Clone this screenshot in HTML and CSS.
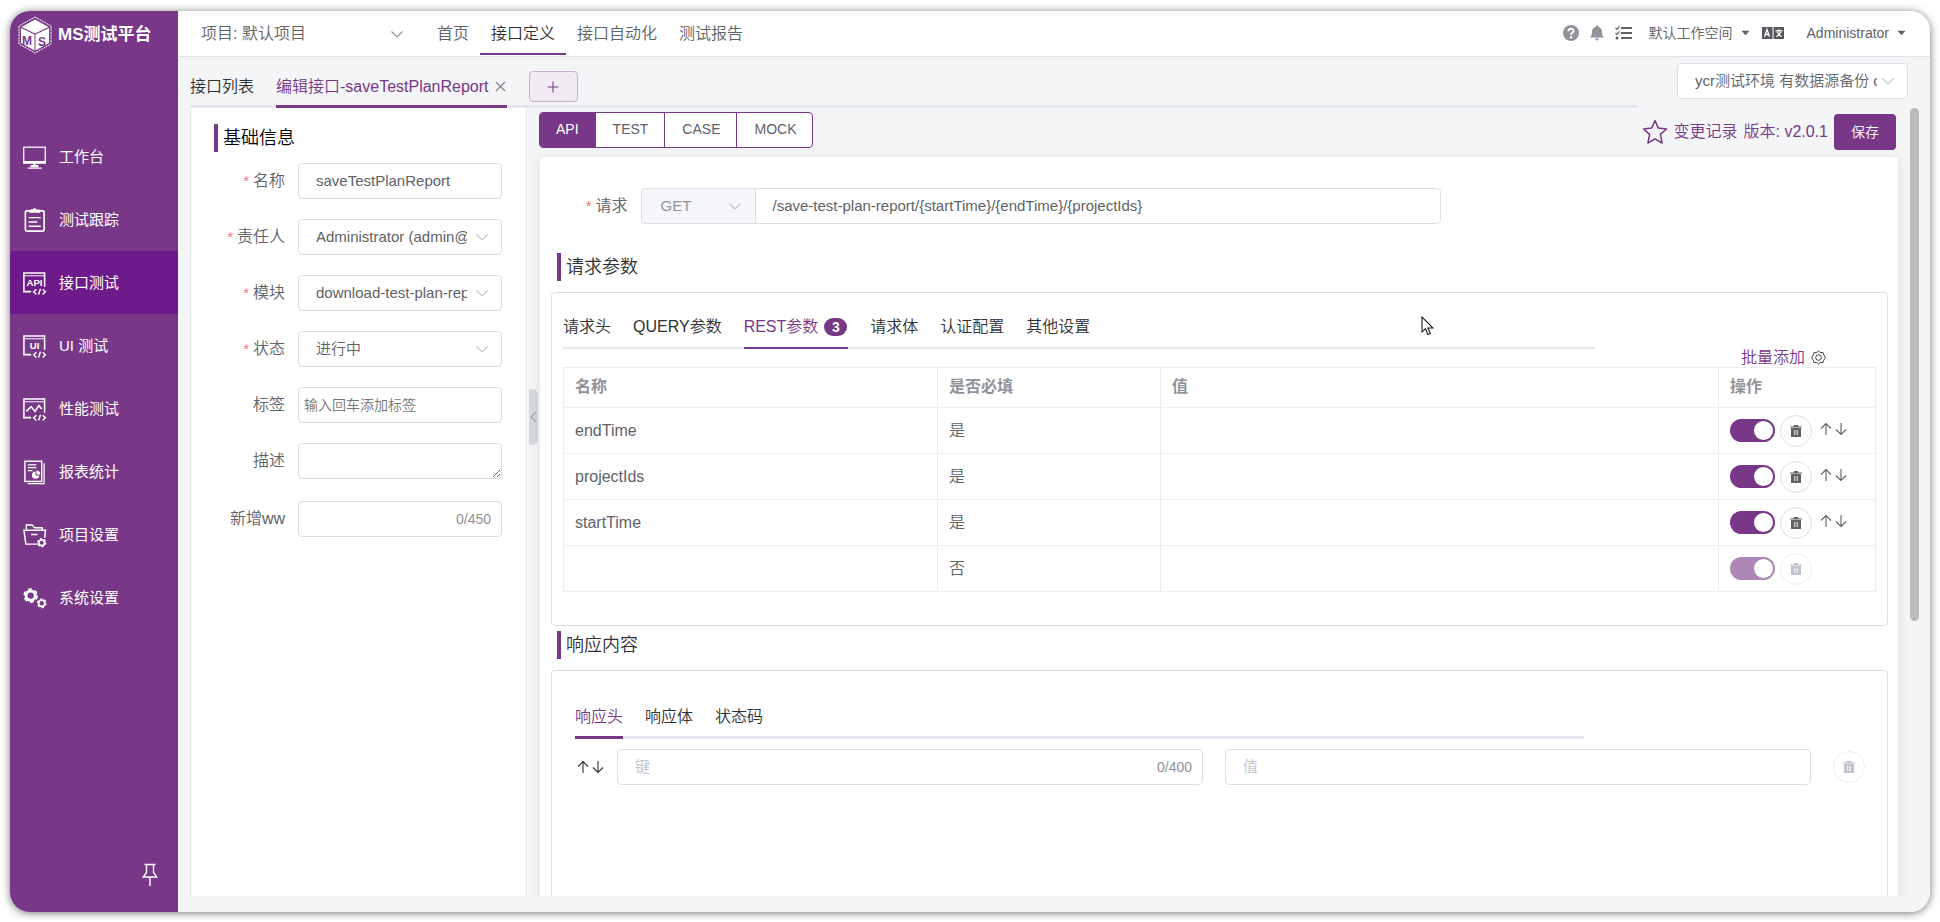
FILE: index.html
```html
<!DOCTYPE html>
<html lang="zh-CN">
<head>
<meta charset="utf-8">
<title>MS测试平台</title>
<link rel="stylesheet" href="styles.css">
</head>
<body>
<svg class="sprite" aria-hidden="true">
  <symbol id="chevron" viewBox="0 0 14 14"><path d="M1.500 4.500l5.500 5.500 5.500-5.500" fill="none" stroke="currentColor" stroke-width="1.200"/></symbol>
  <symbol id="caret" viewBox="0 0 10 6"><path d="M0.500 0.500h9L5 5.500z" fill="currentColor"/></symbol>
  <symbol id="trash" viewBox="0 0 14 14"><path d="M1 2.500h3.500L5 1h4l0.500 1.500H13v1H1zM2 4h10v9H2z" fill="currentColor"/><path d="M5.800 6v5M8.200 6v5" stroke="#fff" stroke-width="0.900"/></symbol>
  <symbol id="up" viewBox="0 0 12 14"><path d="M6 13V1.500M1 6.500l5-5 5 5" fill="none" stroke="currentColor" stroke-width="1.100"/></symbol>
  <symbol id="down" viewBox="0 0 12 14"><path d="M6 1v11.500M1 7.500l5 5 5-5" fill="none" stroke="currentColor" stroke-width="1.100"/></symbol>
  <symbol id="window" viewBox="0 0 26 26"><g fill="none" stroke="#fff"><path d="M2 22V2.500h21.500V17" stroke-width="1.600"/><path d="M2 5.500h21.500" stroke-width="1"/><path d="M1.200 22h8.300" stroke-width="2"/><path d="M15 19.500l-2.800 2.700L15 25M21.500 19.500l2.800 2.700-2.800 2.800M19.200 19l-2 6" stroke-width="1.500"/></g></symbol>
</svg>
<div class="window">
  <aside class="sidebar">
    <a class="brand" href="#">
      <svg width="36" height="38" viewBox="0 0 36 38"><path d="M18 1l16 9v18l-16 9-16-9V10z" fill="none" stroke="#fff" stroke-width="1" stroke-dasharray="2 0.700"/><path d="M18 3.500L31.500 11 18 17.500 4.500 11z" fill="#fff"/><path d="M4 12l13.500 6.500v16L4 27zM32 12l-13.500 6.500v16L32 27z" fill="#fff"/><text x="5" y="29" class="mark">M</text><text x="21" y="30" class="mark">S</text></svg>
      <span>MS测试平台</span>
    </a>
    <nav class="menu">
      <a href="#"><svg viewBox="0 0 26 26"><rect x="1.800" y="2.800" width="22.400" height="16.500" fill="none" stroke="#fff" stroke-width="1.300"/><path d="M1.200 18.300h23.600M13 19v3.500M9 22.500h8" stroke="#fff" stroke-width="2.200"/><path d="M6 24.500h14.500" stroke="#fff" stroke-width="1.400"/></svg>工作台</a>
      <a href="#"><svg viewBox="0 0 26 26"><rect x="3.500" y="3.500" width="19.500" height="21" rx="1.500" fill="none" stroke="#fff" stroke-width="1.700"/><path d="M7.500 5.500h11.500L18 2h-2.500L13 0.500 10.500 2H8.500z" fill="#fff"/><path d="M7 10.500h12.500M7 15h9M7 19.500h12.500" stroke="#fff" stroke-width="1.500"/></svg>测试跟踪</a>
      <a class="active" href="#"><svg viewBox="0 0 26 26"><use href="#window"/><text x="13" y="16.500" text-anchor="middle" class="glyph">API</text></svg>接口测试</a>
      <a href="#"><svg viewBox="0 0 26 26"><use href="#window"/><text x="13" y="16.500" text-anchor="middle" class="glyph">UI</text></svg>UI 测试</a>
      <a href="#"><svg viewBox="0 0 26 26"><use href="#window"/><path d="M4.500 15.500l5-5 4 5 4-6 3 3.500" fill="none" stroke="#fff" stroke-width="1.600"/></svg>性能测试</a>
      <a href="#"><svg viewBox="0 0 26 26"><rect x="3" y="1.800" width="17.500" height="21" fill="none" stroke="#fff" stroke-width="1.500"/><path d="M23 4v21H6" fill="none" stroke="#fff" stroke-width="1.300"/><path d="M6 5.500h9M6 8.500h9M6 11.500h5" stroke="#fff" stroke-width="1.300"/><path d="M14 12.500a3.800 3.800 0 1 0 4 4.200h-4z" fill="#fff"/><path d="M15 11.500a4 4 0 0 1 4 4h-4z" fill="#fff"/></svg>报表统计</a>
      <a href="#"><svg viewBox="0 0 26 26"><path d="M4.500 7V2.500h6l2.500 3h8V8M16.500 22.500H4L2 8h22.500l-1 8M9.500 12.500h6.500" fill="none" stroke="#fff" stroke-width="1.500"/><circle cx="20.500" cy="21" r="3" fill="none" stroke="#fff" stroke-width="1.800"/><circle cx="20.500" cy="21" r="4.300" fill="none" stroke="#fff" stroke-width="1.200" stroke-dasharray="2 2.500"/></svg>项目设置</a>
      <a href="#"><svg viewBox="0 0 26 26"><circle cx="9" cy="10.500" r="4.800" fill="none" stroke="#fff" stroke-width="3"/><circle cx="9" cy="10.500" r="6.800" fill="none" stroke="#fff" stroke-width="1.600" stroke-dasharray="4 3.120"/><circle cx="20.500" cy="18.500" r="3.200" fill="none" stroke="#fff" stroke-width="1.800"/><circle cx="20.500" cy="18.500" r="4.500" fill="none" stroke="#fff" stroke-width="1.200" stroke-dasharray="2.500 2.200"/></svg>系统设置</a>
    </nav>
    <button class="pin" aria-label="固定"><svg width="16" height="24" viewBox="0 0 16 24"><path d="M2.500 1.500h11M4.500 2v7.500L1.200 14h13.600l-3.300-4.500V2M8 14v9" fill="none" stroke="#fff" stroke-width="1.400"/></svg></button>
  </aside>

  <div class="main">
    <header class="topbar">
      <button class="project"><span>项目: 默认项目</span><svg width="14" height="14"><use href="#chevron"/></svg></button>
      <nav class="topnav"><a href="#">首页</a><a class="active" href="#">接口定义</a><a href="#">接口自动化</a><a href="#">测试报告</a></nav>
      <div class="tools">
        <button aria-label="帮助"><svg width="16" height="16" viewBox="0 0 16 16"><circle cx="8" cy="8" r="8" fill="#909399"/><path d="M5.500 6.300c0-3.300 5-3.300 5-0.300 0 1.800-2.400 1.700-2.400 3.700" fill="none" stroke="#fff" stroke-width="2"/><circle cx="8" cy="12.200" r="1.200" fill="#fff"/></svg></button>
        <button aria-label="通知"><svg width="14" height="16" viewBox="0 0 14 16"><path d="M6 0.500h2v1.200c3 .5 4 2.800 4 5.300 0 2.500.5 4 2 5.500H0c1.500-1.500 2-3 2-5.500 0-2.500 1-4.800 4-5.300zM5 13.500h4a2 2 0 0 1-4 0z" fill="#909399"/></svg></button>
        <button aria-label="任务"><svg width="17" height="14" viewBox="0 0 17 14"><path d="M6 2h11M6 7h11M6 12h11" stroke="#606266" stroke-width="1.800"/><path d="M0.500 2l1.300 1.300L4.500 0.500M0.500 7l1.300 1.300L4.500 5.500" fill="none" stroke="#606266" stroke-width="1.200"/><circle cx="2" cy="12" r="1.500" fill="#606266"/></svg></button>
        <button class="drop space">默认工作空间<svg width="9" height="6"><use href="#caret"/></svg></button>
        <button aria-label="语言"><svg width="22" height="12" viewBox="0 0 22 12"><path d="M0 0h10.500v12H0zM11.500 0H22v12H11.500z" fill="#55585e"/><path d="M2.500 9.800L5 2.500l2.500 7.300M3.500 7.500h3" fill="none" stroke="#fff" stroke-width="1.300"/><path d="M13.500 3.800h7M17 2v1.500M15 5l4.500 4.800M19 5l-4.500 4.800" fill="none" stroke="#fff" stroke-width="1.200"/></svg></button>
        <button class="drop user">Administrator<svg width="9" height="6"><use href="#caret"/></svg></button>
      </div>
    </header>

    <div class="tabrow">
      <div class="doctabs">
        <button class="doctab">接口列表</button>
        <button class="doctab active">编辑接口-saveTestPlanReport<svg width="11" height="11" viewBox="0 0 11 11"><path d="M1 1l9 9M10 1l-9 9" stroke="#808287" stroke-width="1.100"/></svg></button>
        <button class="add" aria-label="新增"><svg width="12" height="12" viewBox="0 0 12 12"><path d="M6 0.500v11M0.500 6h11" stroke="#783887" stroke-width="1.100"/></svg></button>
      </div>
      <button class="field env" aria-label="环境"><span>ycr测试环境 有数据源备份 c</span><svg width="14" height="14"><use href="#chevron"/></svg></button>
    </div>

    <div class="body">
      <section class="info">
        <h2 class="title">基础信息</h2>
        <form class="form">
          <label class="req" for="f1">名称</label><input id="f1" class="field" value="saveTestPlanReport">
          <label class="req" for="f2">责任人</label><button type="button" id="f2" class="field"><span>Administrator (admin@metersphere.io)</span><svg width="14" height="14"><use href="#chevron"/></svg></button>
          <label class="req" for="f3">模块</label><button type="button" id="f3" class="field"><span>download-test-plan-report</span><svg width="14" height="14"><use href="#chevron"/></svg></button>
          <label class="req" for="f4">状态</label><button type="button" id="f4" class="field"><span>进行中</span><svg width="14" height="14"><use href="#chevron"/></svg></button>
          <label for="f5">标签</label><input id="f5" class="field tag" placeholder="输入回车添加标签">
          <label for="f6">描述</label><textarea id="f6" class="field" rows="1"></textarea>
          <label for="f7">新增ww</label><div class="field counted"><input id="f7"><span>0/450</span></div>
        </form>
      </section>
      <div class="splitter"><button class="grip" aria-label="收起"><svg width="7" height="12" viewBox="0 0 7 12"><path d="M6 1L1 6l5 5" fill="none" stroke="#a0a3a9" stroke-width="1.100"/></svg></button></div>

      <section class="work">
        <div class="actions">
          <div class="modes"><button class="active">API</button><button>TEST</button><button>CASE</button><button>MOCK</button></div>
          <div class="history">
            <svg width="26" height="26" viewBox="0 0 26 26"><path d="M13 1.500l3.300 7.600 8.200 0.900-6.100 5.400 1.700 8.600L13 19.800 5.900 24l1.700-8.600L1.500 10l8.200-0.900z" fill="none" stroke="#783887" stroke-width="1.500" stroke-linejoin="round"/></svg>
            <a href="#">变更记录</a><a href="#">版本: v2.0.1</a><button class="save">保存</button>
          </div>
        </div>

        <div class="card">
          <div class="request">
            <label class="req" for="url">请求</label>
            <select class="method" aria-label="方法" disabled><option>GET</option></select><svg class="method-arrow" width="14" height="14"><use href="#chevron"/></svg>
            <input id="url" class="field url" value="/save-test-plan-report/{startTime}/{endTime}/{projectIds}">
          </div>
          <h2 class="title">请求参数</h2>
          <div class="box params">
            <div class="subtabs"><button>请求头</button><button>QUERY参数</button><button class="active">REST参数<b>3</b></button><button>请求体</button><button>认证配置</button><button>其他设置</button></div>
            <div class="batch"><a href="#">批量添加</a><svg width="15" height="15" viewBox="0 0 16 16"><path d="M8 1l2 1.800 2.700-.3.900 2.600L15.300 8l-1.700 2.900-.9 2.600-2.700-.3L8 15l-2-1.800-2.700.3-.9-2.600L.7 8l1.700-2.900.9-2.600 2.700.3z" fill="none" stroke="#303133"/><circle cx="8" cy="8" r="3" fill="none" stroke="#303133"/></svg></div>
            <table>
              <colgroup><col class="c1"><col class="c2"><col><col class="c4"></colgroup>
              <thead><tr><th>名称</th><th>是否必填</th><th>值</th><th>操作</th></tr></thead>
              <tbody>
                <tr><td>endTime</td><td>是</td><td></td><td><div class="ops"><input type="checkbox" class="switch" checked aria-label="启用 endTime"><button class="round" aria-label="删除"><svg width="14" height="14"><use href="#trash"/></svg></button><span class="order"><svg width="12" height="14"><use href="#up"/></svg><svg width="12" height="14"><use href="#down"/></svg></span></div></td></tr>
                <tr><td>projectIds</td><td>是</td><td></td><td><div class="ops"><input type="checkbox" class="switch" checked aria-label="启用 projectIds"><button class="round" aria-label="删除"><svg width="14" height="14"><use href="#trash"/></svg></button><span class="order"><svg width="12" height="14"><use href="#up"/></svg><svg width="12" height="14"><use href="#down"/></svg></span></div></td></tr>
                <tr><td>startTime</td><td>是</td><td></td><td><div class="ops"><input type="checkbox" class="switch" checked aria-label="启用 startTime"><button class="round" aria-label="删除"><svg width="14" height="14"><use href="#trash"/></svg></button><span class="order"><svg width="12" height="14"><use href="#up"/></svg><svg width="12" height="14"><use href="#down"/></svg></span></div></td></tr>
                <tr><td></td><td>否</td><td></td><td><div class="ops"><input type="checkbox" class="switch" checked disabled aria-label="启用"><button class="round" disabled aria-label="删除"><svg width="14" height="14"><use href="#trash"/></svg></button></div></td></tr>
              </tbody>
            </table>
          </div>
          <h2 class="title second">响应内容</h2>
          <div class="box response">
            <div class="subtabs thick"><button class="active">响应头</button><button>响应体</button><button>状态码</button></div>
            <div class="pair">
              <span class="order"><svg width="12" height="14"><use href="#up"/></svg><svg width="12" height="14"><use href="#down"/></svg></span>
              <div class="field counted"><input placeholder="键" aria-label="键"><span>0/400</span></div>
              <input class="field" placeholder="值" aria-label="值">
              <button class="round" disabled aria-label="删除"><svg width="14" height="14"><use href="#trash"/></svg></button>
            </div>
          </div>
        </div>
      </section>
      <div class="scrollbar"></div>
    </div>
  </div>
</div>
<svg class="cursor" width="13" height="20" viewBox="0 0 13 20"><path d="M1 1v15l3.500-3.300 2.300 5.800 2.500-1-2.400-5.500H12z" fill="#fff" stroke="#1c1c2a" stroke-width="1.100"/></svg>
</body>
</html>
```

FILE: styles.css
```css
* { box-sizing: border-box; }
body {
  margin: 0;
  padding: 11px 10px 10px;
  height: 100vh;
  overflow: hidden;
  background: #fff;
  color: #606266;
  font: 350 16px/24px "Liberation Sans", "Noto Sans CJK SC", sans-serif;
}
button, input, select, textarea { font: inherit; color: inherit; margin: 0; }
button { background: none; border: 0; padding: 0; cursor: pointer; white-space: nowrap; }
a { color: inherit; text-decoration: none; }
svg { flex: none; display: block; }
.sprite { position: absolute; width: 0; height: 0; }

.window {
  display: flex;
  height: 100%;
  border-radius: 20px;
  overflow: hidden;
  box-shadow: 0 1px 9px rgba(0, 0, 0, .55);
}

.sidebar {
  width: 168px;
  flex: none;
  display: flex;
  flex-direction: column;
  background: #783887;
  color: #fff;
}
.brand { display: flex; align-items: center; gap: 5px; height: 114px; padding: 4px 0 70px 7px; font-size: 17px; font-weight: 700; }
.mark { font: 700 12px "Liberation Sans", sans-serif; fill: #783887; }
.menu a { display: flex; align-items: center; gap: 12px; height: 63px; padding-left: 12px; font-size: 15px; font-weight: 400; }
.menu svg { width: 25px; height: 26px; }
.menu .active { background: #6f1a8b; }
.glyph { font: 700 10px "Liberation Sans", sans-serif; fill: #fff; }
.pin { margin: auto 20px 25px auto; }

.main { flex: 1; min-width: 0; display: flex; flex-direction: column; background: #f4f5f7; }
.topbar { display: flex; align-items: center; height: 46px; flex: none; background: #fff; border-bottom: 1px solid #e2e3e6; }
.project { display: flex; align-items: center; justify-content: space-between; width: 203px; margin-left: 23px; }
.project svg { color: #909399; }
.topnav { display: flex; align-self: flex-start; margin-left: 22px; }
.topnav a { height: 44px; padding: 11px 11px 0; border-bottom: 2px solid transparent; }
.topnav .active { color: #303133; border-color: #783887; }
.tools { display: flex; align-items: center; margin-left: auto; padding: 0 24px 2px 0; gap: 11px; font-size: 14px; }
.drop { display: flex; align-items: center; gap: 8px; }
.tools .space { margin: 0 1px 0 6px; }
.tools .user { margin-left: 12px; }

.tabrow { display: flex; flex: none; height: 51px; padding: 0 22px 0 12px; justify-content: space-between; }
.doctabs { display: flex; width: calc(100% - 270px); border-bottom: 3px solid #e4e7ed; color: #303133; }
.doctab { display: flex; align-items: center; height: 51px; padding-top: 8px; margin-right: 22px; gap: 6px; }
.doctab.active { color: #783887; border-bottom: 3px solid #783887; padding-top: 11px; padding-right: 1px; }
.add { display: flex; align-items: center; justify-content: center; width: 49px; height: 31px; margin-top: 14px; background: #f2ebf3; border: 1px solid #c9afcf; border-radius: 4px; }
.field {
  width: 100%;
  height: 36px;
  min-width: 0;
  padding: 0 17px 1px;
  background: #fff;
  border: 1px solid #dcdfe6;
  border-radius: 4px;
  font-size: 15px;
  outline: 0;
}
button.field { display: flex; align-items: center; gap: 8px; padding-right: 12px; text-align: left; }
.field > span { flex: 1; overflow: hidden; }
.field svg { color: #c0c4cc; }
.field::placeholder, .field input::placeholder { color: #c0c4cc; opacity: 1; }
.env { width: 231px; margin-top: 6px; }
button.env { gap: 4px; }

.body { flex: 1; min-height: 0; display: flex; padding: 0 11px 16px 12px; }
.info { width: 337px; flex: none; background: #fff; border-left: 1px solid #e4e5e8; border-right: 1px solid #e4e7ed; padding: 16px 24px 0 23px; }
.title { margin: 0; padding-left: 5px; border-left: 4px solid #783887; font-size: 18px; line-height: 28px; font-weight: 350; color: #303133; }
.info .title { color: #000; }
.form { display: grid; grid-template-columns: 71px 1fr; column-gap: 13px; row-gap: 20px; margin-top: 11px; }
.form label { text-align: right; line-height: 36px; white-space: nowrap; }
.form label[for="f6"] { height: 38px; }
.req::before { content: "*"; color: #f56c6c; font-size: 14px; margin-right: 4px; }
.form .tag { padding: 0 5px; font-size: 14px; }
.form .tag::placeholder { color: #757575; }
textarea.field { display: block; resize: vertical; height: 36px; }
.counted { display: flex; align-items: center; padding-right: 10px; }
.counted input { flex: 1; min-width: 0; border: 0; padding: 0; outline: 0; background: none; }
.counted > span { flex: none; font-size: 14px; color: #909399; }

.splitter { width: 12px; flex: none; display: flex; align-items: center; padding-bottom: 170px; }
.grip { display: flex; align-items: center; justify-content: center; width: 9px; height: 56px; margin-left: 2px; background: #d5d8de; border-radius: 0 6px 6px 0; }

.work { flex: 1; min-width: 0; overflow: hidden; padding-right: 12px; margin-left: -12px; padding-left: 12px; }
.actions { display: flex; align-items: flex-start; justify-content: space-between; height: 49px; padding-top: 4px; }
.modes { display: flex; border: 1px solid #783887; border-radius: 4px; background: #fff; overflow: hidden; font-size: 14px; }
.modes button { height: 34px; padding: 0 16px 2px 17px; border-left: 1px solid #783887; }
.modes button:first-child { border-left: 0; padding-left: 16px; }
.modes .active { background: #783887; color: #fff; }
.history { display: flex; align-items: center; padding: 2px 2px 0 0; gap: 6px; color: #783887; }
.save { width: 62px; height: 36px; background: #783887; color: #fff; border-radius: 4px; font-size: 14px; }

.card { min-height: 900px; padding: 31px 10px 0 11px; margin-left: 1px; background: #fff; border-radius: 4px; box-shadow: 0 2px 12px rgba(0, 0, 0, .1); }
.request { display: flex; align-items: center; padding-left: 35px; }
.request label { margin-right: 14px; }
.method { appearance: none; width: 115px; height: 36px; margin-right: -1px; padding: 0 18px; border: 1px solid #dcdfe6; border-radius: 4px 0 0 4px; background: #f5f7fa; color: #909399; opacity: 1; font-size: 15px; }
.method-arrow { margin-left: -27px; margin-right: 13px; z-index: 1; color: #c0c4cc; }
.url { width: 686px; border-radius: 0 4px 4px 0; padding-left: 16px; }
.card > .title { margin: 29px 0 11px 6px; }
.card > .second { margin: 5px 0 11px 6px; }
.box { border: 1px solid #dcdfe6; border-radius: 4px; }
.params { padding: 10px 11px 33px; }
.subtabs { display: flex; gap: 22px; width: 1032px; max-width: 100%; height: 46px; border-bottom: 2px solid #e4e7ed; color: #303133; }
.subtabs button { display: flex; align-items: center; height: 46px; padding-top: 1px; }
.subtabs .active { color: #783887; border-bottom: 2px solid #783887; padding: 3px 1px 0 0; }
.subtabs b { margin-left: 6px; width: 23px; height: 18px; border-radius: 9px; background: #783887; color: #fff; font-size: 14px; font-weight: 700; line-height: 18px; }
.batch { display: flex; align-items: center; justify-content: flex-end; gap: 6px; height: 18px; padding: 0 50px 1px 0; color: #783887; }
table { width: 100%; border-collapse: collapse; table-layout: fixed; }
.c1 { width: 374px; } .c2 { width: 223px; } .c4 { width: 157px; }
th, td { border: 1px solid #ebeef5; padding: 0 11px; text-align: left; }
th { height: 40px; padding-bottom: 2px; color: #909399; font-weight: 700; }
td { height: 46px; }
.ops { display: flex; align-items: center; gap: 5px; }
.switch { appearance: none; width: 45px; height: 23px; border-radius: 12px; background: #783887; padding: 2px; display: flex; justify-content: flex-end; }
.switch::before { content: ""; width: 19px; height: 19px; border-radius: 50%; background: #fff; }
.switch:disabled { opacity: .6; }
.round { display: flex; align-items: center; justify-content: center; width: 32px; height: 32px; flex: none; border: 1px solid #dcdfe6; border-radius: 50%; background: #fff; color: #606266; }
.round:disabled { color: #c0c4cc; border-color: #ebeef5; }
.order { display: flex; gap: 3px; margin-left: 3px; color: #606266; }
.ops .order { margin-bottom: 4px; }

.response { height: 500px; padding: 22px 22px 22px 23px; }
.thick { width: 1009px; border-bottom-width: 3px; }
.thick .active { border-bottom-width: 3px; padding: 4px 0 0; }
.pair { display: grid; grid-template-columns: auto 1fr 1fr 32px; align-items: center; column-gap: 22px; margin-top: 10px; }
.pair .order { margin: 0 -9px 0 2px; color: #303133; }

.scrollbar { width: 9px; height: 513px; border-radius: 5px; background: #b8babb; }
.cursor { position: absolute; left: 1421px; top: 316px; }
```
